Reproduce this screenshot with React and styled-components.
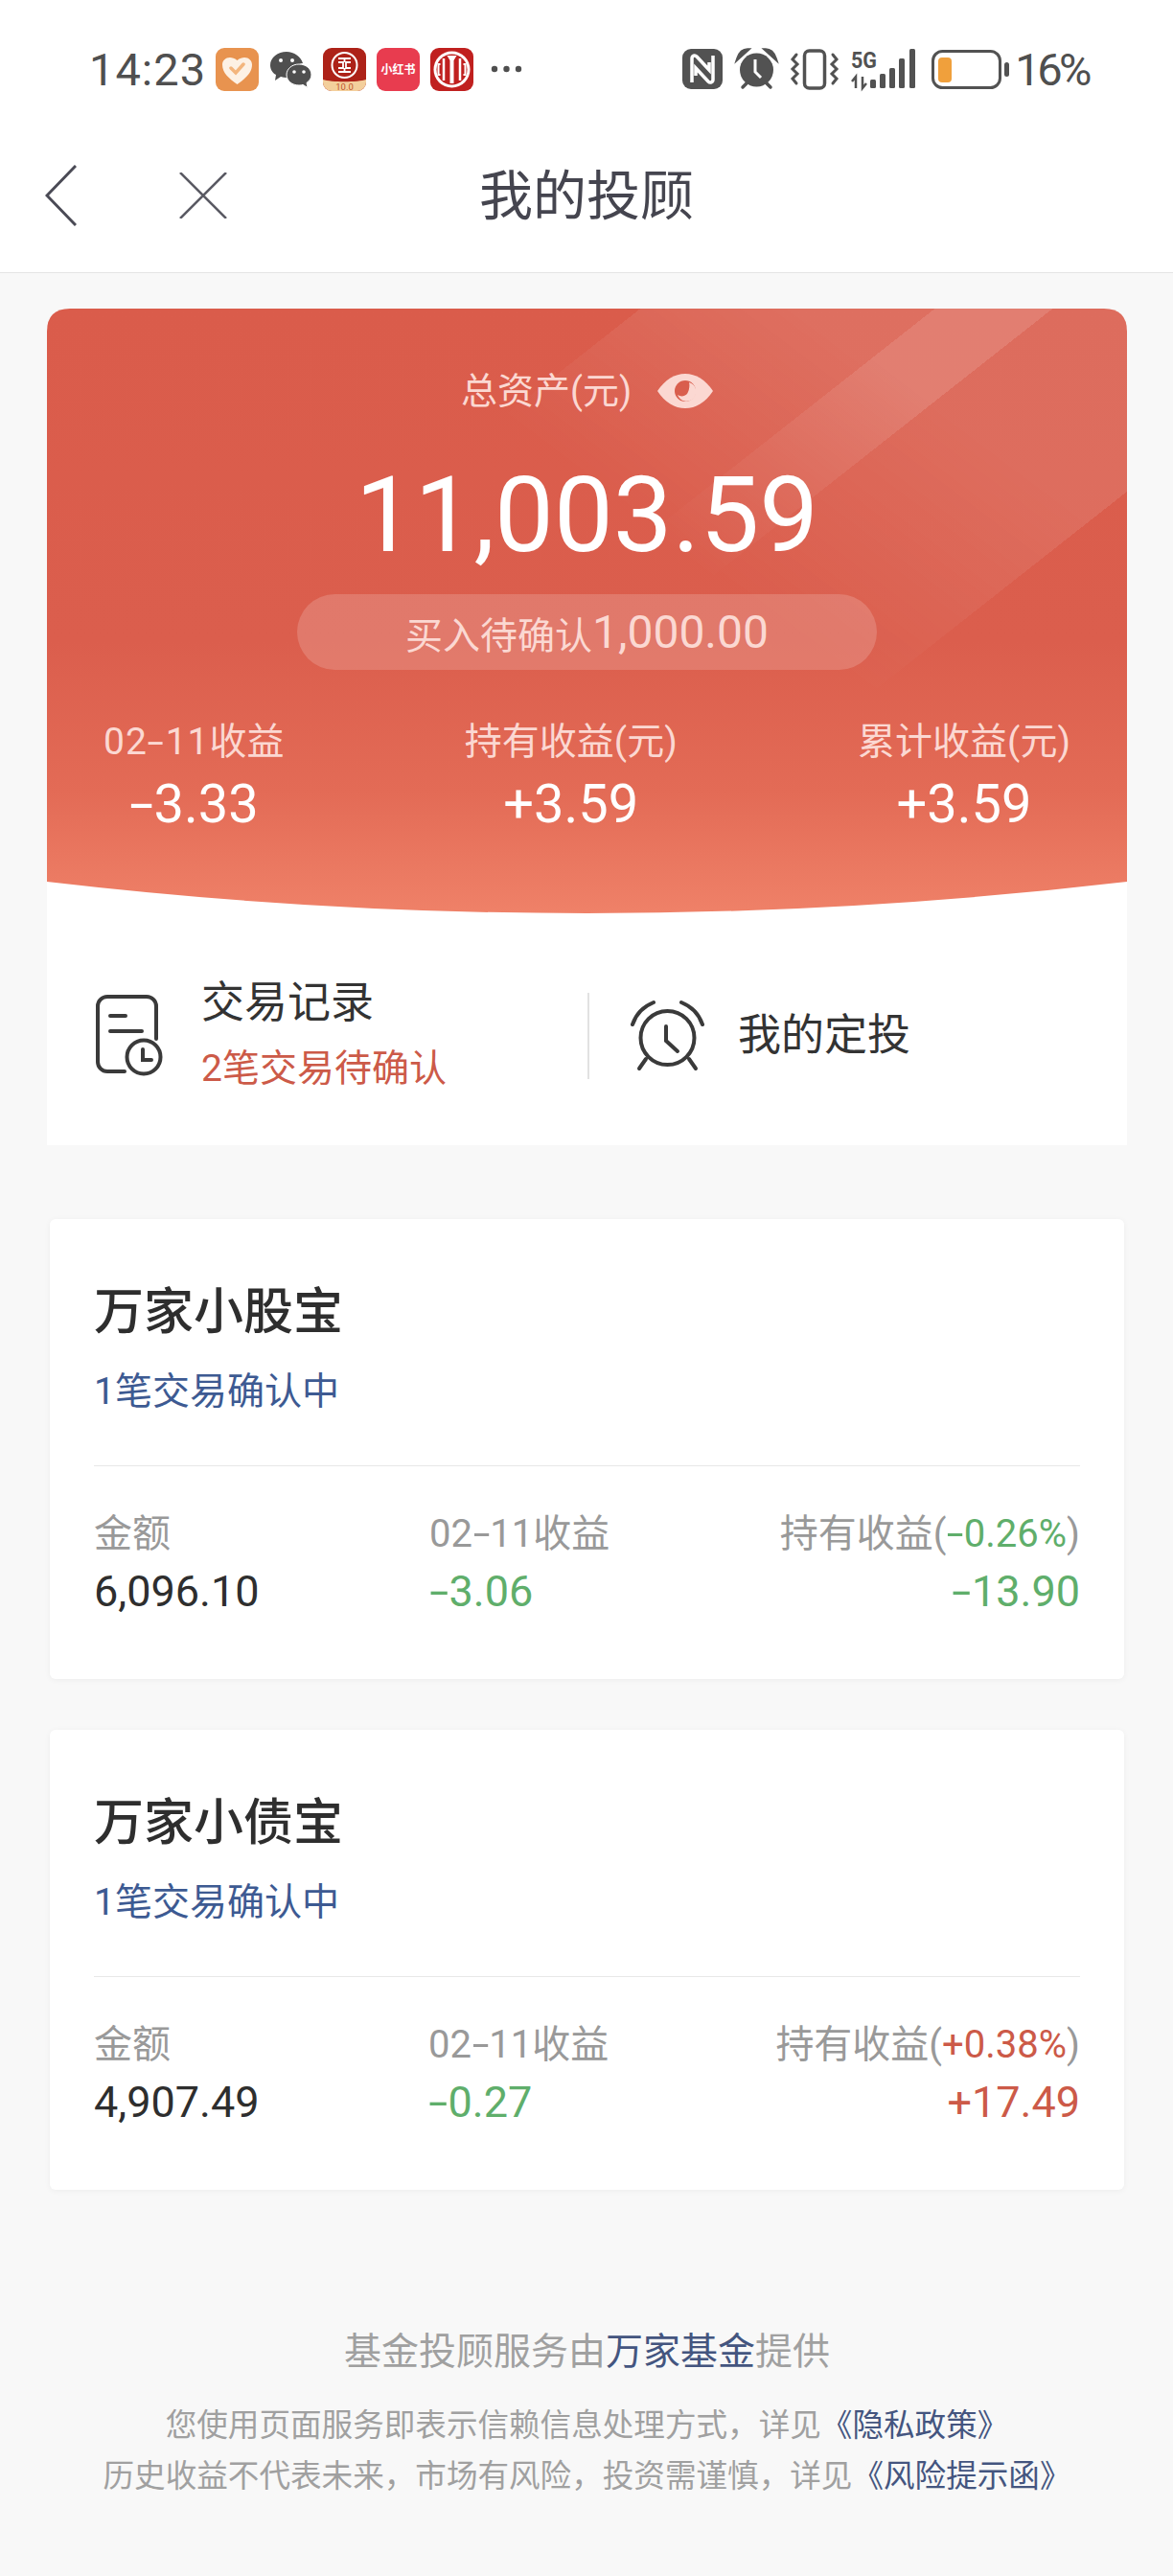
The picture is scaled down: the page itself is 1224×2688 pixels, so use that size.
import React from "react";
import styled, { createGlobalStyle } from "styled-components";

const FONT = `Roboto, "Noto Sans CJK SC", "Noto Sans", sans-serif`;

const GlobalStyle = createGlobalStyle`
  html, body {
    margin: 0;
    padding: 0;
    background: #f8f8f8;
  }
  * {
    box-sizing: border-box;
  }
`;

const funds = [
  {
    name: "万家小股宝",
    pending: "1笔交易确认中",
    amount: "6,096.10",
    daily: "-3.06",
    rate: "-0.26%",
    hold: "-13.90",
    colStart: 350,
  },
  {
    name: "万家小债宝",
    pending: "1笔交易确认中",
    amount: "4,907.49",
    daily: "-0.27",
    rate: "+0.38%",
    hold: "+17.49",
    colStart: 349,
  },
];

const tone = (value) => (value.startsWith("-") ? "#5fae6b" : "#cc5a48");

// the reference font has a much wider dash than Roboto
const Signed = ({ value }) =>
  value.startsWith("-") ? (
    <>
      <Dash>-</Dash>
      {value.slice(1)}
    </>
  ) : (
    value
  );

const HeartApp = () => (
  <AppIcon viewBox="0 0 45 45">
    <rect width="45" height="45" rx="9" fill="#e8934f" />
    <path d="M22.5 38C14 32 7 26 7 17.5 7 11 15 7 22.500 13 30 7 38 11 38 17.500 38 26 31 32 22.500 38Z" fill="#fdf1e4" />
    <path d="M16 21l5 5 8-9" fill="none" stroke="#f3b57c" strokeWidth="3.500" strokeLinecap="round" />
  </AppIcon>
);

const WechatIcon = () => (
  <AppIcon viewBox="0 0 45 45">
    <path d="M18 4C9 4 1 10 1 18c0 4 2 8 6 10l-1 6 6-4c2 .6 4 1 6 1 1 0 1 0 2-.2C24 21 31 16 35 16 33 9 26 4 18 4Z" fill="#4f4f4f" />
    <path d="M31 17c-7.500 0-13 5-13 11s5.500 11 13 11c1.500 0 3-.2 4-.6l5 3-1-5c3-2 5-5 5-8.400 0-6-5.500-11-13-11Z" fill="#4f4f4f" stroke="#fff" strokeWidth="1" />
    <circle cx="12" cy="13" r="2" fill="#fff" />
    <circle cx="24" cy="13" r="2" fill="#fff" />
    <circle cx="26" cy="25" r="1.800" fill="#fff" />
    <circle cx="36" cy="25" r="1.800" fill="#fff" />
  </AppIcon>
);

const BankApp = () => (
  <AppIcon viewBox="0 0 45 45">
    <rect width="45" height="45" rx="9" fill="#ad2218" />
    <path d="M0 33c8 3 37 3 45 0v3a9 9 0 0 1-9 9H9a9 9 0 0 1-9-9Z" fill="#f3cf9c" />
    <circle cx="22.500" cy="18" r="13" fill="#ad2218" stroke="#fff" strokeWidth="2" />
    <path d="M16 11h13M22.500 11v4M16 15h5v6h-5M29 15h-5v6h5M16 25h13M22.500 21v4" fill="none" stroke="#fff" strokeWidth="1.800" />
    <text x="22.500" y="43.500" textAnchor="middle" fontSize="9.500" fill="#c0562e" fontFamily="Roboto, sans-serif">10.0</text>
  </AppIcon>
);

const NoteApp = () => (
  <AppIcon viewBox="0 0 45 45">
    <rect width="45" height="45" rx="9" fill="#e83c4f" />
    <text x="22.500" y="27" textAnchor="middle" fontSize="12" fontWeight="700" fill="#fff" fontFamily={`"Noto Sans CJK SC", sans-serif`}>小红书</text>
  </AppIcon>
);

const CiticApp = () => (
  <AppIcon viewBox="0 0 45 45">
    <rect width="45" height="45" rx="9" fill="#c0201f" />
    <circle cx="22.500" cy="22.500" r="19" fill="#fff" />
    <circle cx="22.500" cy="22.500" r="16" fill="#c0201f" />
    <path d="M14 11v23M31 11v23" stroke="#fff" strokeWidth="2.500" />
    <path d="M17.500 8h10l-3 5v24h-4V13Z" fill="#fff" />
    <path d="M10.500 17h-2v11h2M34.500 17h2v11h-2" fill="none" stroke="#fff" strokeWidth="2" />
  </AppIcon>
);

const Dots = () => (
  <DotsIcon viewBox="0 0 33 10">
    <circle cx="4" cy="5" r="3.200" fill="#4f4f4f" />
    <circle cx="16.500" cy="5" r="3.200" fill="#4f4f4f" />
    <circle cx="29" cy="5" r="3.200" fill="#4f4f4f" />
  </DotsIcon>
);

const NfcIcon = () => (
  <StatusSvg width="42" height="42" viewBox="0 0 42 42">
    <rect width="42" height="42" rx="9" fill="#525252" />
    <path d="M10 35V10c0-3 3-4 5-2l13 14V14M32 7v25c0 3-3 4-5 2L14 20v8" fill="none" stroke="#fff" strokeWidth="3.500" />
  </StatusSvg>
);

const SmallAlarm = () => (
  <StatusSvg width="41" height="42" viewBox="0 0 41 42">
    <circle cx="20.500" cy="22" r="17.500" fill="#525252" />
    <path d="M1 10C3 4 7 1 11 1ZM40 10C38 4 34 1 30 1ZM6 40l5-5M35 40l-5-5" stroke="#525252" strokeWidth="3.500" fill="#525252" strokeLinecap="round" />
    <path d="M19 11v13l6 6" fill="none" stroke="#fff" strokeWidth="3" />
  </StatusSvg>
);

const VibrateIcon = () => (
  <StatusSvg width="50" height="43" viewBox="0 0 50 43">
    <rect x="14.500" y="2" width="21" height="39" rx="5" fill="none" stroke="#525252" strokeWidth="3.500" />
    <path d="M6 6L2 11l5 5-5 5 5 5-5 5 4 5M44 6l4 5-5 5 5 5-5 5 5 5-4 5" fill="none" stroke="#525252" strokeWidth="3" strokeLinecap="round" />
  </StatusSvg>
);

const SignalIcon = () => (
  <StatusSvg width="67" height="42" viewBox="0 0 67 42" $shift={-2}>
    <text x="0" y="20" fontSize="24" fontWeight="700" fill="#525252" textLength="27" lengthAdjust="spacingAndGlyphs" fontFamily="Roboto, sans-serif">5G</text>
    <path d="M5 41V29L1 34M12 29v12l4-5" fill="none" stroke="#525252" strokeWidth="2.500" />
    <rect x="20" y="32" width="6" height="9" rx="1.500" fill="#525252" />
    <rect x="30" y="26" width="6" height="15" rx="1.500" fill="#525252" />
    <rect x="40" y="20" width="6" height="21" rx="1.500" fill="#525252" />
    <rect x="50" y="10" width="6" height="31" rx="1.500" fill="#525252" />
    <rect x="61" y="0" width="6" height="41" rx="1.500" fill="#525252" />
  </StatusSvg>
);

const BatteryIcon = () => (
  <StatusSvg width="81" height="41" viewBox="0 0 81 41" $shift={2}>
    <rect x="1.500" y="1.500" width="70" height="38" rx="10" fill="none" stroke="#525252" strokeWidth="3" />
    <rect x="7" y="8" width="14" height="26" rx="4" fill="#f0a03c" />
    <rect x="76" y="13" width="5" height="15" rx="2.500" fill="#525252" />
  </StatusSvg>
);

const BackIcon = () => (
  <NavSvg width="33" height="64" viewBox="0 0 33 64" $gap={107}>
    <path d="M32 1L2 32l30 31" fill="none" stroke="#4a4a55" strokeWidth="3" />
  </NavSvg>
);

const CloseIcon = () => (
  <NavSvg width="50" height="48" viewBox="0 0 50 48">
    <path d="M1 0l48 48M49 0L1 48" fill="none" stroke="#5a5a63" strokeWidth="2.500" />
  </NavSvg>
);

const EyeIcon = () => (
  <svg width="58" height="36" viewBox="0 0 58 36">
    <path d="M0 18C8 6 18 0 29 0s21 6 29 18C50 30 40 36 29 36S8 30 0 18Z" fill="#fbd8d2" />
    <circle cx="29" cy="18" r="11" fill="#d95e4d" />
    <path d="M33 9a10 10 0 1 1-12 13c3 2 7 2 10-1 2-3 3-8 2-12Z" fill="#fbd8d2" />
  </svg>
);

const RecordIcon = () => (
  <svg width="70" height="85" viewBox="0 0 70 85" fill="none" stroke="#3a3a3a" strokeWidth="4" strokeLinecap="round">
    <path d="M63 46V12A10 10 0 0 0 53 2H12A10 10 0 0 0 2 12V70A10 10 0 0 0 12 80H30" />
    <path d="M15 22H31M15 38H48" />
    <circle cx="50" cy="65" r="17.500" />
    <path d="M49 57V68H58" />
  </svg>
);

const AlarmIcon = () => (
  <svg width="77" height="75" viewBox="0 0 77 75" fill="none" stroke="#3a3a3a" strokeWidth="4" strokeLinecap="round">
    <circle cx="38.500" cy="40" r="28" />
    <path d="M2 26C6 14 14 7 24 3M75 26C71 14 63 7 53 3" />
    <path d="M16 62L9 72M61 62L68 72" />
    <path d="M37 28V43L49 54" />
  </svg>
);

const App = () => {
  return (
    <Page>
      <GlobalStyle />
      <StatusBar>
        <AppIcons>
          <Time>14:23</Time>
          <HeartApp />
          <WechatIcon />
          <BankApp />
          <NoteApp />
          <CiticApp />
          <Dots />
        </AppIcons>
        <SystemIcons>
          <NfcIcon />
          <SmallAlarm />
          <VibrateIcon />
          <SignalIcon />
          <BatteryIcon />
          <Percent>16%</Percent>
        </SystemIcons>
      </StatusBar>

      <NavBar>
        <NavLeft>
          <BackIcon />
          <CloseIcon />
        </NavLeft>
        <NavTitle>我的投顾</NavTitle>
      </NavBar>

      <Content>
        <Summary>
          <Hero>
            <Shine />
            <HeroLabel>
              总资产(元)
              <EyeIcon />
            </HeroLabel>
            <Amount>11,003.59</Amount>
            <Pill>
              买入待确认<PillNumber>1,000.00</PillNumber>
            </Pill>
            <Stats>
              <Stat>
                <StatLabel>
                  <HeroDate>
                    02<Dash>-</Dash>11
                  </HeroDate>
                  收益
                </StatLabel>
                <StatValue>
                  <Signed value="-3.33" />
                </StatValue>
              </Stat>
              <Stat>
                <StatLabel>持有收益(元)</StatLabel>
                <StatValue>+3.59</StatValue>
              </Stat>
              <Stat>
                <StatLabel>累计收益(元)</StatLabel>
                <StatValue>+3.59</StatValue>
              </Stat>
            </Stats>
          </Hero>
          <Shortcuts>
            <ShortcutRecord>
              <RecordIcon />
              <div>
                <ShortcutTitle>交易记录</ShortcutTitle>
                <ShortcutHint>2笔交易待确认</ShortcutHint>
              </div>
            </ShortcutRecord>
            <ShortcutDivider />
            <ShortcutPlan>
              <AlarmIcon />
              <ShortcutTitle>我的定投</ShortcutTitle>
            </ShortcutPlan>
          </Shortcuts>
        </Summary>

        {funds.map((fund) => (
          <FundCard key={fund.name}>
            <FundName>{fund.name}</FundName>
            <FundPending>{fund.pending}</FundPending>
            <FundDivider />
            <FundGrid $colStart={fund.colStart}>
              <FundLabel>金额</FundLabel>
              <FundLabel>
                02<Dash>-</Dash>11收益
              </FundLabel>
              <FundLabel $right>
                持有收益(
                <Rate $color={tone(fund.rate)}>
                  <Signed value={fund.rate} />
                </Rate>
                )
              </FundLabel>
              <FundValue $color="#2e2e2e">{fund.amount}</FundValue>
              <FundValue $color={tone(fund.daily)}>
                <Signed value={fund.daily} />
              </FundValue>
              <FundValue $color={tone(fund.hold)} $right>
                <Signed value={fund.hold} />
              </FundValue>
            </FundGrid>
          </FundCard>
        ))}

        <Footer>
          <Provider>
            基金投顾服务由<FooterLink>万家基金</FooterLink>提供
          </Provider>
          <Notes>
            <div>
              您使用页面服务即表示信赖信息处理方式，详见
              <FooterLink>《隐私政策》</FooterLink>
            </div>
            <div>
              历史收益不代表未来，市场有风险，投资需谨慎，详见
              <FooterLink>《风险提示函》</FooterLink>
            </div>
          </Notes>
        </Footer>
      </Content>
    </Page>
  );
};

const Page = styled.div`
  width: 1224px;
  height: 2688px;
  overflow: hidden;
  background: #f8f8f8;
  font-family: ${FONT};
`;

const Dash = styled.span`
  display: inline-block;
  margin: 0 0.09em;
  transform: scaleX(1.6);
`;

const StatusBar = styled.div`
  height: 144px;
  padding: 0 88px 0 93px;
  display: flex;
  align-items: center;
  justify-content: space-between;
  background: #fff;
  color: #4f4f4f;
`;

const AppIcons = styled.div`
  display: flex;
  align-items: center;
  gap: 11px;
`;

const SystemIcons = styled.div`
  display: flex;
  align-items: center;
  gap: 15px;
`;

const Time = styled.span`
  font-size: 47px;
  width: 121px;
  letter-spacing: 1px;
`;

const AppIcon = styled.svg`
  width: 45px;
  height: 45px;
  flex: none;
`;

const DotsIcon = styled.svg`
  width: 33px;
  height: 10px;
  margin-left: 7px;
`;

const StatusSvg = styled.svg`
  flex: none;
  overflow: visible;
  margin-left: ${(props) => props.$shift || 0}px;
`;

const Percent = styled.span`
  font-size: 47px;
  margin-left: -9px;
  letter-spacing: -3.5px;
`;

const NavBar = styled.div`
  height: 141px;
  padding-top: 26px;
  display: grid;
  grid-template-columns: 1fr auto 1fr;
  align-items: start;
  background: #fff;
  border-bottom: 1px solid #e4e4e4;
`;

const NavLeft = styled.div`
  margin: 2px 0 0 47px;
  display: flex;
  align-items: center;
`;

const NavSvg = styled.svg`
  margin-right: ${(props) => props.$gap || 0}px;
`;

const NavTitle = styled.div`
  font-size: 56px;
  color: #45454f;
  line-height: 70px;
`;

const Content = styled.div`
  padding: 37px 48px 0 49px;
`;

const Summary = styled.div`
  width: 1127px;
  background: #fff;
  border-radius: 24px 24px 0 0;
`;

const Hero = styled.div`
  position: relative;
  height: 631px;
  padding-top: 62px;
  display: flex;
  flex-direction: column;
  align-items: center;
  background: linear-gradient(180deg, #da5c4b 0%, #db5e4d 55%, #e36b56 80%, #ef8168 100%);
  clip-path: path("M0 24 Q0 0 24 0 H1103 Q1127 0 1127 24 V598 Q563 664 0 598 Z");
`;

const Shine = styled.div`
  position: absolute;
  inset: 0;
  background: linear-gradient(
    141.8deg,
    transparent 383px,
    rgba(255, 255, 255, 0.12) 383px,
    rgba(255, 255, 255, 0.12) 573px,
    rgba(255, 255, 255, 0.21) 573px,
    rgba(255, 255, 255, 0.21) 649px,
    rgba(255, 255, 255, 0.1) 649px,
    rgba(255, 255, 255, 0.1) 847px,
    transparent 847px
  );
  mask-image: linear-gradient(217deg, #000 200px, transparent 490px);
`;

const HeroLabel = styled.div`
  position: relative;
  height: 48px;
  display: flex;
  align-items: center;
  gap: 27px;
  font-size: 38px;
  line-height: 48px;
  color: #fbd8d2;
`;

const Amount = styled.div`
  position: relative;
  margin-top: 46px;
  height: 120px;
  font-size: 110px;
  line-height: 120px;
  color: #fff;
`;

const Pill = styled.div`
  position: relative;
  margin-top: 22px;
  width: 605px;
  height: 79px;
  border-radius: 40px;
  display: flex;
  align-items: center;
  justify-content: center;
  background: rgba(255, 255, 255, 0.17);
  font-size: 39px;
  color: #fbd8d2;
`;

const PillNumber = styled.span`
  font-size: 48px;
`;

const Stats = styled.div`
  position: relative;
  margin-top: 51px;
  width: 100%;
  padding: 0 59px;
  display: flex;
  justify-content: space-between;
`;

const Stat = styled.div`
  display: flex;
  flex-direction: column;
  align-items: center;
`;

const StatLabel = styled.div`
  font-size: 39px;
  line-height: 48px;
  color: #fbd8d2;
`;

const HeroDate = styled.span`
  letter-spacing: 1px;
`;

const StatValue = styled.div`
  margin-top: 11px;
  font-size: 56px;
  line-height: 60px;
  color: #fff;
`;

const Shortcuts = styled.div`
  height: 242px;
  padding: 13px 0 0 51px;
  display: flex;
  align-items: center;
`;

const ShortcutRecord = styled.div`
  width: 513px;
  display: flex;
  align-items: center;
  gap: 40px;
`;

const ShortcutDivider = styled.div`
  width: 2px;
  height: 90px;
  background: #e2e2e2;
`;

const ShortcutPlan = styled.div`
  margin-left: 43px;
  display: flex;
  align-items: center;
  gap: 35px;
`;

const ShortcutTitle = styled.div`
  font-size: 45px;
  line-height: 68px;
  color: #333;
`;

const ShortcutHint = styled.div`
  font-size: 39px;
  line-height: 68px;
  color: #cc5a48;
`;

const FundCard = styled.div`
  margin: 77px 3px 0;
  height: 480px;
  padding: 63px 46px 0;
  background: #fff;
  border-radius: 6px;
  box-shadow: 0 1px 6px rgba(0, 0, 0, 0.05);

  & + & {
    margin-top: 53px;
  }
`;

const FundName = styled.div`
  font-size: 52px;
  line-height: 70px;
  font-weight: 500;
  color: #2e2e2e;
`;

const FundPending = styled.div`
  margin-top: 19px;
  font-size: 39px;
  line-height: 56px;
  color: #3d5a92;
`;

const FundDivider = styled.div`
  margin-top: 49px;
  height: 1px;
  background: #e8e8e8;
`;

const FundGrid = styled.div`
  margin-top: 46px;
  display: grid;
  grid-template-columns: ${(props) => props.$colStart}px 1fr auto;
  row-gap: 7px;
`;

const FundLabel = styled.div`
  font-size: 40px;
  line-height: 50px;
  color: #999;
  text-align: ${(props) => (props.$right ? "right" : "left")};
`;

const Rate = styled.span`
  color: ${(props) => props.$color};
`;

const FundValue = styled.div`
  font-size: 45px;
  line-height: 56px;
  color: ${(props) => props.$color};
  text-align: ${(props) => (props.$right ? "right" : "left")};
`;

const Footer = styled.div`
  margin-top: 141px;
  text-align: center;
  color: #a0a0a0;
`;

const Provider = styled.div`
  font-size: 39px;
  line-height: 56px;
`;

const Notes = styled.div`
  margin-top: 23px;
  font-size: 32.6px;
  line-height: 53px;
`;

const FooterLink = styled.span`
  color: #44557f;
`;

export default App;
